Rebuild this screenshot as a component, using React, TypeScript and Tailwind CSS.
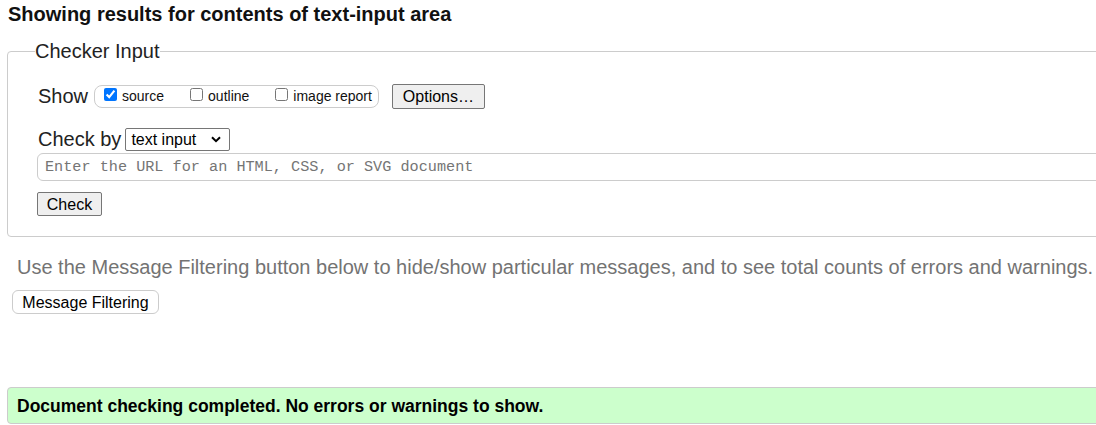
import React from "react";

export default function App() {
  return (
    <div className="w-[1096px] h-[425px] overflow-hidden bg-white text-[#111] font-['Liberation_Sans',Arial,sans-serif]">
      <h2 className="pt-[3px] pl-[8px] text-[20px] leading-[23px] font-bold whitespace-nowrap">
        Showing results for contents of text-input area
      </h2>

      <fieldset className="mt-[14px] ml-[7px] w-[1200px] border border-[#cccccc] rounded-[4px] pl-[30px] pr-4 pt-[21px] pb-[19px]">
        <legend className="-ml-[3px] text-[20px] leading-[23px] text-[#222]">Checker Input</legend>

        <div className="flex items-center h-[25px]">
          <span className="text-[20px] leading-[23px] text-[#222]">Show</span>
          <div className="ml-[6px] flex items-center h-[23px] border border-[#cccccc] rounded-[8px] pl-[9px] pr-[6px] gap-[26px] text-[14px]">
            <label className="flex items-center gap-[5px]">
              <input type="checkbox" defaultChecked className="m-0 w-[13px] h-[13px] -mt-[5px]" />
              <span>source</span>
            </label>
            <label className="flex items-center gap-[5px]">
              <input type="checkbox" className="m-0 w-[13px] h-[13px] -mt-[5px]" />
              <span>outline</span>
            </label>
            <label className="flex items-center gap-[5px]">
              <input type="checkbox" className="m-0 w-[13px] h-[13px] -mt-[5px]" />
              <span>image report</span>
            </label>
          </div>
          <button className="ml-[13px] h-[25px] w-[93px] bg-[#efefef] border border-[#767676] rounded-[2px] text-[16px] text-black">
            Options…
          </button>
        </div>

        <div className="mt-[19px] flex items-center h-[23px]">
          <span className="text-[20px] leading-[23px] text-[#222]">Check by</span>
          <div className="relative ml-[4px] w-[105px] h-[23px] border border-[#767676] rounded-[2px] flex items-center pl-[5px] text-[16px] text-black">
            <span>text input</span>
            <svg className="absolute right-[8px] top-[7px]" width="10" height="7" viewBox="0 0 10 7">
              <path d="M1 1.2 L5 5.2 L9 1.2" fill="none" stroke="#000" strokeWidth="2" />
            </svg>
          </div>
        </div>

        <div className="mt-[2px] -ml-[1px] h-[28px] w-[1150px] border border-[#cccccc] rounded-[6px] flex items-center pl-[7px] font-['Liberation_Mono',monospace] text-[15.2px] text-[#757575]">
          Enter the URL for an HTML, CSS, or SVG document
        </div>

        <button className="mt-[11px] -ml-[1px] h-[24px] w-[65px] bg-[#efefef] border border-[#767676] rounded-[2px] text-[16px] text-black">
          Check
        </button>
      </fieldset>

      <p className="mt-[19px] pl-[17px] text-[20px] leading-[23px] text-[#737373] whitespace-nowrap">
        Use the Message Filtering button below to hide/show particular messages, and to see total counts of errors and warnings.
      </p>

      <button className="mt-[11px] ml-[12px] h-[24px] w-[147px] bg-white border border-[#cccccc] rounded-[6px] text-[16px] text-black">
        Message Filtering
      </button>

      <div className="mt-[72px] ml-[7px] w-[1150px] h-[37px] bg-[#ccffcc] border border-[#cccccc] rounded-l-[4px] pl-[9px] pt-[8px] text-[17.5px] leading-[20px] font-bold text-black">
        Document checking completed. No errors or warnings to show.
      </div>
    </div>
  );
}
